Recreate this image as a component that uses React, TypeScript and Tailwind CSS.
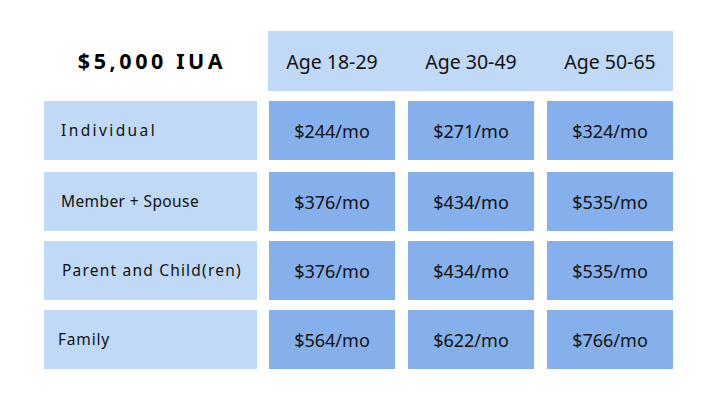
import React from "react";

const rows = [
  { label: "Individual", cls: "pl-[17px] tracking-[2.4px]", prices: ["$244/mo", "$271/mo", "$324/mo"], mt: "mt-[10px]" },
  { label: "Member + Spouse", cls: "pl-[17px] tracking-[0.4px]", prices: ["$376/mo", "$434/mo", "$535/mo"], mt: "mt-[12px]" },
  { label: "Parent and Child(ren)", cls: "pl-[18px] tracking-[1.2px]", prices: ["$376/mo", "$434/mo", "$535/mo"], mt: "mt-[10px]" },
  { label: "Family", cls: "pl-[14px] tracking-[0.8px]", prices: ["$564/mo", "$622/mo", "$766/mo"], mt: "mt-[10px]" },
];

export default function App() {
  return (
    <div
      className="w-[706px] h-[406px] bg-white pt-[31px] pl-[44px] text-[#111]"
      style={{ fontFamily: '"Noto Sans", "Open Sans", sans-serif' }}
    >
      <div className="flex h-[60px]">
        <div className="w-[213px] flex items-center justify-center">
          <span className="text-[21.5px] font-bold tracking-[3.6px] text-black pl-[3px]">$5,000 IUA</span>
        </div>
        <div className="ml-[11px] w-[405px] bg-[#bfd9f6] flex pl-[1px] pt-[1px] gap-[13px] items-center">
          {["Age 18-29", "Age 30-49", "Age 50-65"].map((a) => (
            <div key={a} className="w-[126px] text-center text-[19.5px]">
              {a}
            </div>
          ))}
        </div>
      </div>
      {rows.map((r) => (
        <div key={r.label} className={`flex h-[59px] ${r.mt}`}>
          <div className={`w-[213px] bg-[#bfd9f6] flex items-center pt-[1px] text-[15.5px] ${r.cls}`}>{r.label}</div>
          <div className="ml-[12px] flex gap-[13px]">
            {r.prices.map((p, i) => (
              <div key={i} className="w-[126px] bg-[#85b0eb] flex items-center justify-center pt-[2px] text-[18px]">
                {p}
              </div>
            ))}
          </div>
        </div>
      ))}
    </div>
  );
}
